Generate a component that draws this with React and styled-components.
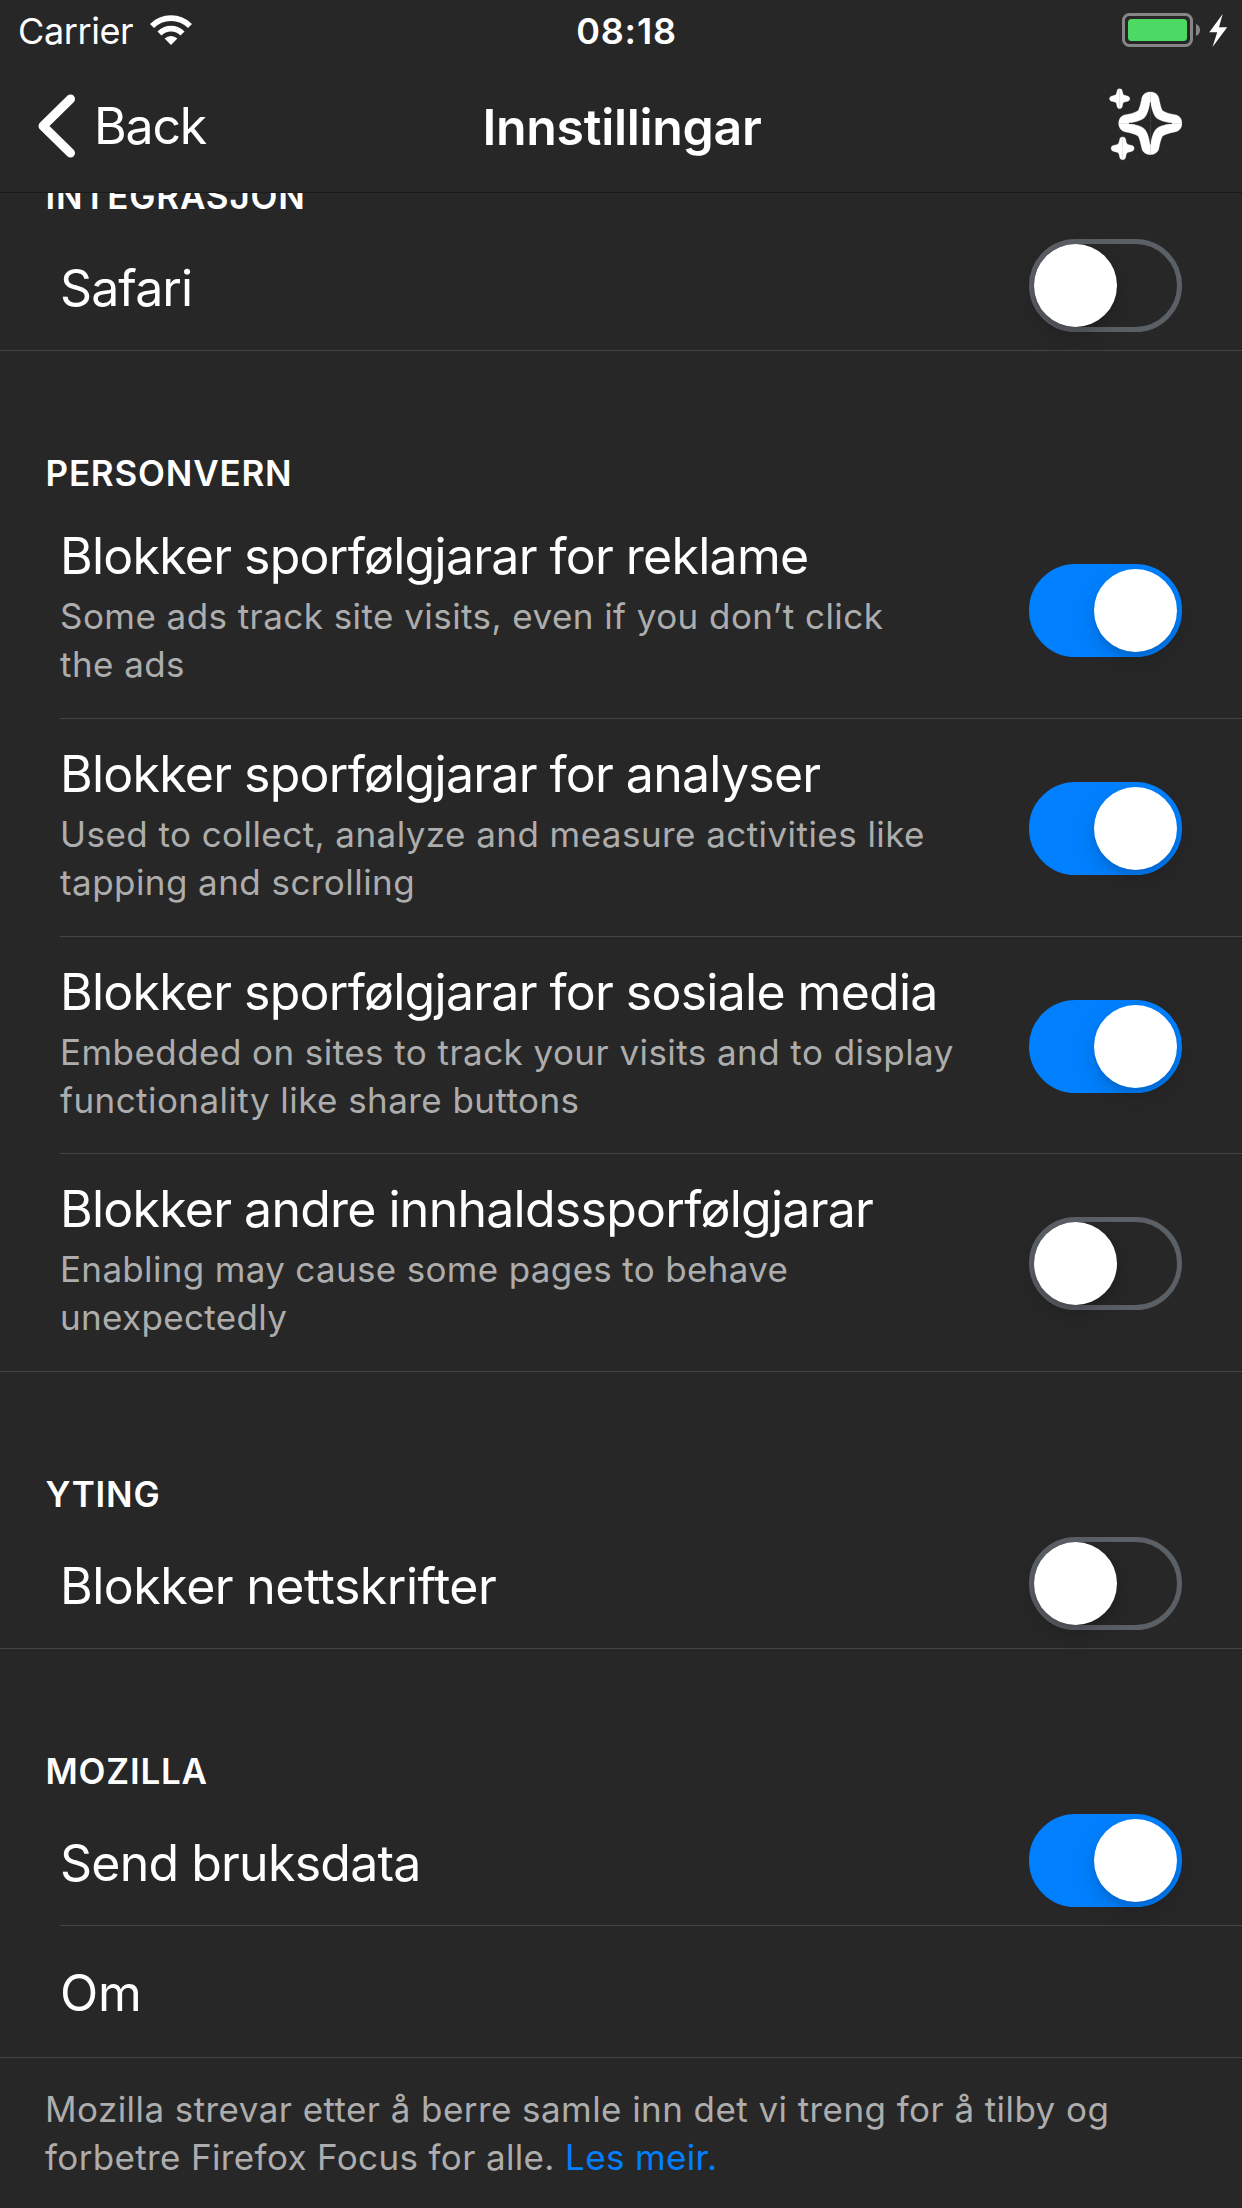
import React, { useState } from 'react';
import styled, { createGlobalStyle } from 'styled-components';

const Global = createGlobalStyle`
  * { box-sizing: border-box; }
  html, body { margin: 0; background: #272727; }
`;

const Screen = styled.main`
  width: 1242px;
  height: 2208px;
  overflow: hidden;
  display: flex;
  flex-direction: column;
  background: #272727;
  color: #fff;
  font-family: Inter, 'Liberation Sans', sans-serif;
`;

const StatusBar = styled.div`
  flex: none;
  height: 60px;
  display: grid;
  grid-template-columns: 1fr auto 1fr;
  align-items: center;
  font-size: 36px;
  line-height: 58px;
`;

const Carrier = styled.div`
  display: flex;
  align-items: center;
  gap: 17px;
  padding-left: 18px;
`;

const CarrierName = styled.span`
  padding-top: 2px;
  letter-spacing: -0.4px;
`;

const Time = styled.div`
  padding: 2px 0 0 11px;
  font-weight: 600;
  letter-spacing: 0.8px;
`;

const Power = styled.div`
  display: flex;
  justify-content: flex-end;
  padding-right: 14px;
`;

const NavBar = styled.header`
  flex: none;
  height: 133px;
  display: grid;
  grid-template-columns: 1fr auto 1fr;
  align-items: center;
  padding-bottom: 4px;
  border-bottom: 1px solid #191919;
`;

const BackButton = styled.button`
  display: flex;
  align-items: center;
  gap: 16px;
  padding: 4px 0 0 36px;
  border: 0;
  background: none;
  color: inherit;
  font: inherit;
  font-size: 50px;
  line-height: 60px;
  letter-spacing: -1.2px;
`;

const Title = styled.h1`
  margin: 0;
  padding: 6px 0 0 2px;
  font-size: 50px;
  line-height: 60px;
  font-weight: 600;
  letter-spacing: -0.3px;
`;

const NavAction = styled.div`
  display: flex;
  justify-content: flex-end;
  padding-right: 60px;
`;

const Content = styled.div`
  flex: 1;
  overflow: hidden;
`;

const SectionHeader = styled.h2`
  margin: 0;
  height: ${(p) => p.$height}px;
  padding: 0 45.5px ${(p) => p.$bottom}px;
  display: flex;
  align-items: flex-end;
  font-size: 35px;
  line-height: 42px;
  font-weight: 600;
  letter-spacing: 0.8px;
`;

const ClippedHeader = styled.div`
  height: 26px;
  overflow: hidden;
  display: flex;
  align-items: flex-end;
`;

const Row = styled.div`
  height: ${(p) => p.$height || 132}px;
  margin-left: ${(p) => (p.$last ? 0 : 60)}px;
  padding: 0 60px 0 ${(p) => (p.$last ? 60 : 0)}px;
  border-bottom: 1px solid #454545;
  display: flex;
  align-items: center;
  justify-content: space-between;
`;

const RowText = styled.div`
  padding-top: ${(p) => p.$shift || 0}px;
  padding-bottom: ${(p) => (p.$shift ? 0 : 5)}px;
`;

const RowTitle = styled.div`
  font-size: 50px;
  line-height: 60px;
  white-space: nowrap;
  letter-spacing: ${(p) => p.$tracking ?? -0.74}px;
  word-spacing: -0.6px;
`;

const RowDetail = styled.div`
  margin-top: 6px;
  font-size: 35px;
  line-height: 48px;
  color: #adadad;
  white-space: pre-line;
  letter-spacing: ${(p) => p.$tracking ?? 0.44}px;
`;

const Switch = styled.button`
  flex: none;
  width: 153px;
  height: 93px;
  margin-top: 2px;
  padding: 0;
  border: 5px solid ${(p) => (p.$on ? '#0080ff' : '#5b5f66')};
  border-radius: 47px;
  background: ${(p) => (p.$on ? '#0080ff' : 'transparent')};
  display: flex;
  justify-content: ${(p) => (p.$on ? 'flex-end' : 'flex-start')};
`;

const Knob = styled.span`
  width: 83px;
  height: 83px;
  border-radius: 50%;
  background: #fff;
  box-shadow: 0 9px 24px rgba(0, 0, 0, 0.15), 0 5px 5px rgba(0, 0, 0, 0.08);
`;

const Footer = styled.p`
  margin: 0;
  padding: 27px 45px 0;
  font-size: 35px;
  line-height: 48px;
  color: #adadad;
  letter-spacing: 0.43px;
`;

const FooterLine = styled.span`
  display: block;
  letter-spacing: ${(p) => p.$tracking ?? 0.43}px;
`;

const Link = styled.a`
  color: #0080ff;
`;

const WifiIcon = () => (
  <svg width="42" height="30" viewBox="-21 -30 42 30" fill="none" stroke="#fff" strokeWidth="5.7">
    <path d="M-19 -19A26.85 26.85 0 0 1 19 -19" />
    <path d="M-11.5 -11.5A16.2 16.2 0 0 1 11.5 -11.5" />
    <path d="M0 0L-6.4 -6.4A9 9 0 0 1 6.4 -6.4Z" fill="#fff" stroke="none" />
  </svg>
);

const BatteryIcon = () => (
  <svg width="106" height="36" viewBox="0 0 106 36">
    <rect x="1.5" y="2.5" width="68" height="31" rx="6" fill="none" stroke="#868686" strokeWidth="3" />
    <rect x="6" y="7" width="59" height="22" rx="3.5" fill="#4cd964" />
    <path d="M74 12Q78 13.5 78 18T74 24Z" fill="#868686" />
    <path d="M100.7 2L87.3 20.2H95.2L90.5 35L105.2 15.2H97Z" fill="#fff" />
  </svg>
);

const ChevronIcon = () => (
  <svg width="42" height="66" viewBox="0 0 42 66" fill="none" stroke="#fff" strokeWidth="9" strokeLinecap="round" strokeLinejoin="round">
    <path d="M34.5 6L7 33L34.5 60" />
  </svg>
);

const quarter = 'M0 0V-94C14 -94 24 -86 26 -74C30 -56 32 -46 37 -38C46 -32 58 -29 74 -26C87 -24 95 -14 95 0Z';
const hole = 'M0 1V-63C4 -40 9 -25 17 -17C25 -9 40 -4 64 0V1Z';
const spark = 'M0 1V-30C5 -30 7 -28 8 -23C9.500 -14 11 -12 13 -11C16 -9.500 20 -9 25 -7.500C29 -6 30 -4 30 0V1Z';

const Mirrored = ({ d, x, y, scale = 1, fill = '#fff' }) => (
  <g transform={`translate(${x} ${y}) scale(${scale})`} fill={fill} stroke={fill} strokeWidth="0.8">
    {[[1, 1], [-1, 1], [1, -1], [-1, -1]].map(([sx, sy]) => (
      <path key={`${sx}${sy}`} d={d} transform={`scale(${sx} ${sy})`} />
    ))}
  </g>
);

const SparklesIcon = () => (
  <svg width="74" height="74" viewBox="0 0 222 222">
    <Mirrored d={quarter} x={127} y={109} />
    <Mirrored d={hole} x={127} y={109} fill="#272727" />
    <Mirrored d={spark} x={35} y={35} />
    <Mirrored d={spark} x={44} y={184} scale={1.14} />
  </svg>
);

const Toggle = ({ initial }) => {
  const [on, setOn] = useState(initial);
  return (
    <Switch type="button" role="switch" aria-checked={on} $on={on} onClick={() => setOn(!on)}>
      <Knob />
    </Switch>
  );
};

const trackers = [
  { title: 'Blokker sporfølgjarar for reklame', detail: 'Some ads track site visits, even if you don’t click\nthe ads', on: true, height: 218 },
  { title: 'Blokker sporfølgjarar for analyser', detail: 'Used to collect, analyze and measure activities like\ntapping and scrolling', on: true, height: 218 },
  { title: 'Blokker sporfølgjarar for sosiale media', detail: 'Embedded on sites to track your visits and to display\nfunctionality like share buttons', on: true, height: 217 },
  { title: 'Blokker andre innhaldssporfølgjarar', detail: 'Enabling may cause some pages to behave\nunexpectedly', on: false, height: 218, tracking: 0.33 },
];

const SimpleRow = ({ title, on, last, shift = 6, tracking }) => (
  <Row $last={last}>
    <RowText $shift={shift}>
      <RowTitle $tracking={tracking}>{title}</RowTitle>
    </RowText>
    {on !== undefined && <Toggle initial={on} />}
  </Row>
);

export default function App() {
  return (
    <Screen>
      <Global />
      <StatusBar>
        <Carrier>
          <CarrierName>Carrier</CarrierName>
          <WifiIcon />
        </Carrier>
        <Time>08:18</Time>
        <Power>
          <BatteryIcon />
        </Power>
      </StatusBar>
      <NavBar>
        <BackButton type="button">
          <ChevronIcon />
          Back
        </BackButton>
        <Title>Innstillingar</Title>
        <NavAction>
          <SparklesIcon />
        </NavAction>
      </NavBar>
      <Content>
        <ClippedHeader>
          <SectionHeader $height={44} $bottom={2}>INTEGRASJON</SectionHeader>
        </ClippedHeader>
        <SimpleRow title="Safari" on={false} last tracking={-0.9} />
        <SectionHeader $height={150} $bottom={7}>PERSONVERN</SectionHeader>
        {trackers.map(({ title, detail, on, height, tracking }, i) => (
          <Row key={title} $height={height} $last={i === trackers.length - 1}>
            <RowText>
              <RowTitle>{title}</RowTitle>
              <RowDetail $tracking={tracking}>{detail}</RowDetail>
            </RowText>
            <Toggle initial={on} />
          </Row>
        ))}
        <SectionHeader $height={145} $bottom={2}>YTING</SectionHeader>
        <SimpleRow title="Blokker nettskrifter" on={false} last tracking={-0.48} />
        <SectionHeader $height={145} $bottom={2}>MOZILLA</SectionHeader>
        <SimpleRow title="Send bruksdata" on />
        <SimpleRow title="Om" last shift={2} tracking={-0.2} />
        <Footer>
          <FooterLine>Mozilla strevar etter å berre samle inn det vi treng for å tilby og</FooterLine>
          <FooterLine $tracking={0.36}>
            forbetre Firefox Focus for alle. <Link>Les meir.</Link>
          </FooterLine>
        </Footer>
      </Content>
    </Screen>
  );
}
